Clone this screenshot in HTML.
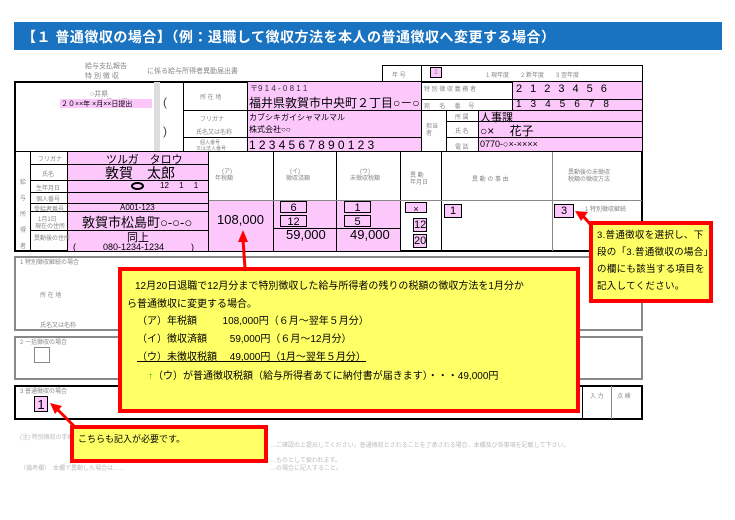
<!DOCTYPE html>
<html><head><meta charset="utf-8"><style>
*{margin:0;padding:0;box-sizing:border-box}
body{width:735px;height:520px;background:#fff;position:relative;overflow:hidden;font-family:"Liberation Sans","Noto Sans CJK JP",sans-serif;color:#000}
.a{position:absolute}
.b{position:absolute;border:1px solid #000}
.p{background:#fcc8fc}
.t{position:absolute;font-size:6px;color:#888;white-space:nowrap}
.k{position:absolute;white-space:nowrap}
.y{position:absolute;background:#ffff66;border:4px solid #f00}
.bx{position:absolute;border:1px solid #000;background:#fcc8fc;font-size:11px;text-align:center;line-height:12px}
</style></head><body>
<div class="a" style="left:14px;top:22px;width:708px;height:28px;background:#1a73c0"></div>
<div class="k" style="left:22px;top:27px;font-size:14px;font-weight:bold;color:#fff;letter-spacing:0.5px">【１ 普通徴収の場合】（例：退職して徴収方法を本人の普通徴収へ変更する場合）</div>
<div class="t" style="left:85px;top:61px;font-size:7px">給与支払報告</div>
<div class="t" style="left:85px;top:71px;font-size:7px">特 別 徴 収</div>
<div class="t" style="left:147px;top:66px;font-size:7px">に係る給与所得者異動届出書</div>
<div class="b" style="left:382px;top:65px;width:261px;height:17px"></div>
<div class="a" style="left:421px;top:65px;width:1px;height:17px;background:#000"></div>
<div class="t" style="left:392px;top:70px">年 号</div>
<div class="bx" style="left:430px;top:67px;width:12px;height:11px;font-size:7px;color:#888;line-height:10px">1</div>
<div class="t" style="left:486px;top:70px">1 現年度　　2 新年度　　3 翌年度</div>
<div class="a" style="left:14px;top:81px;width:629px;height:171px;border:2px solid #000"></div>
<div class="a" style="left:154px;top:82px;width:6px;height:70px;background:#ddd"></div>
<div class="t" style="left:90px;top:89px;font-size:7px">○井県</div>
<div class="t" style="left:90px;top:97px;font-size:7px">○○市長 　殿</div>
<div class="a p" style="left:60px;top:99px;width:92px;height:9px"></div>
<div class="k" style="left:61px;top:99px;font-size:7px">２０××年 ×月××日提出</div>
<div class="t" style="left:163px;top:95px;font-size:12px;color:#444">(</div>
<div class="t" style="left:163px;top:124px;font-size:12px;color:#444">)</div>
<div class="a" style="left:183px;top:82px;width:1px;height:70px;background:#000"></div>
<div class="a" style="left:247px;top:82px;width:1px;height:70px;background:#000"></div>
<div class="a p" style="left:248px;top:82px;width:173px;height:70px"></div>
<div class="a" style="left:183px;top:110px;width:238px;height:1px;background:#000"></div>
<div class="a" style="left:183px;top:137px;width:238px;height:1px;background:#000"></div>
<div class="t" style="left:200px;top:92px">所 在 地</div>
<div class="t" style="left:200px;top:114px">フリガナ</div>
<div class="t" style="left:196px;top:127px">氏名又は名称</div>
<div class="t" style="left:200px;top:139px;font-size:5px">個人番号</div>
<div class="t" style="left:196px;top:145px;font-size:5px">又は法人番号</div>
<div class="k" style="left:250px;top:83px;font-size:8px;color:#333">〒9 1 4 - 0 8 1 1</div>
<div class="k" style="left:249px;top:94px;font-size:12px">福井県敦賀市中央町２丁目○－○</div>
<div class="k" style="left:249px;top:112px;font-size:8px">カブシキガイシャマルマル</div>
<div class="k" style="left:249px;top:124px;font-size:8px">株式会社○○</div>
<div class="k" style="left:249px;top:138px;font-size:12px;letter-spacing:3.2px">1234567890123</div>
<div class="a" style="left:421px;top:82px;width:1px;height:70px;background:#000"></div>
<div class="a p" style="left:512px;top:82px;width:130px;height:28px"></div>
<div class="a p" style="left:478px;top:110px;width:164px;height:42px"></div>
<div class="a" style="left:422px;top:99px;width:220px;height:1px;background:#000"></div>
<div class="a" style="left:422px;top:110px;width:220px;height:1px;background:#000"></div>
<div class="a" style="left:512px;top:82px;width:1px;height:28px;background:#000"></div>
<div class="t" style="left:424px;top:84px">特 別 徴 収 義 務 者</div>
<div class="t" style="left:424px;top:101px">宛 　 名 　 番 　号</div>
<div class="k" style="left:516px;top:83px;font-size:11px;letter-spacing:8px">2123456</div>
<div class="k" style="left:516px;top:99px;font-size:10px;letter-spacing:9px">1345678</div>
<div class="a" style="left:446px;top:110px;width:1px;height:42px;background:#000"></div>
<div class="a" style="left:478px;top:110px;width:1px;height:42px;background:#000"></div>
<div class="a" style="left:446px;top:121px;width:196px;height:1px;background:#000"></div>
<div class="a" style="left:446px;top:137px;width:196px;height:1px;background:#000"></div>
<div class="t" style="left:426px;top:121px">担当</div>
<div class="t" style="left:426px;top:128px">者</div>
<div class="t" style="left:455px;top:112px">所 属</div>
<div class="t" style="left:455px;top:126px">氏 名</div>
<div class="t" style="left:455px;top:142px">電 話</div>
<div class="k" style="left:480px;top:109px;font-size:11px">人事課</div>
<div class="k" style="left:480px;top:122px;font-size:12px">○×　 花子</div>
<div class="k" style="left:480px;top:139px;font-size:9px">0770-○×-××××</div>
<div class="a" style="left:15px;top:151px;width:627px;height:1px;background:#000"></div>
<div class="a" style="left:30px;top:152px;width:1px;height:99px;background:#000"></div>
<div class="a" style="left:67px;top:152px;width:1px;height:99px;background:#000"></div>
<div class="a p" style="left:68px;top:152px;width:140px;height:99px"></div>
<div class="a p" style="left:209px;top:200px;width:191px;height:51px"></div>
<div class="a" style="left:208px;top:152px;width:1px;height:99px;background:#000"></div>
<div class="a" style="left:273px;top:152px;width:1px;height:99px;background:#000"></div>
<div class="a" style="left:336px;top:152px;width:1px;height:99px;background:#000"></div>
<div class="a" style="left:400px;top:152px;width:1px;height:99px;background:#000"></div>
<div class="a" style="left:441px;top:152px;width:1px;height:99px;background:#000"></div>
<div class="a" style="left:552px;top:152px;width:1px;height:99px;background:#888"></div>
<div class="a" style="left:209px;top:200px;width:433px;height:1px;background:#888"></div>
<div class="a" style="left:274px;top:228px;width:126px;height:1px;background:#000"></div>
<div class="t" style="left:20px;top:175px;line-height:16px;width:6px;white-space:normal">給与所得者</div>
<div class="a" style="left:31px;top:164px;width:177px;height:1px;background:#000"></div>
<div class="a" style="left:31px;top:180px;width:177px;height:1px;background:#000"></div>
<div class="a" style="left:31px;top:192px;width:177px;height:1px;background:#000"></div>
<div class="a" style="left:31px;top:203px;width:177px;height:1px;background:#000"></div>
<div class="a" style="left:31px;top:211px;width:177px;height:1px;background:#000"></div>
<div class="a" style="left:31px;top:230px;width:177px;height:1px;background:#000"></div>
<div class="t" style="left:38px;top:154px">フリガナ</div>
<div class="t" style="left:42px;top:169px">氏名</div>
<div class="t" style="left:36px;top:183px">生年月日</div>
<div class="t" style="left:36px;top:194px">個人番号</div>
<div class="t" style="left:34px;top:204px">受給者番号</div>
<div class="t" style="left:38px;top:214px">1月1日</div>
<div class="t" style="left:35px;top:221px">現在の住所</div>
<div class="t" style="left:34px;top:233px">異動後の住所</div>
<div class="k" style="left:106px;top:151px;font-size:11px">ツルガ　タロウ</div>
<div class="k" style="left:105px;top:163px;font-size:14px">敦賀　太郎</div>
<div class="a" style="left:131px;top:182px;width:13px;height:8px;border:2px solid #000;border-radius:50%"></div>
<div class="k" style="left:160px;top:180px;font-size:8px">12 　1 　1</div>
<div class="k" style="left:120px;top:203px;font-size:8px">A001-123</div>
<div class="k" style="left:82px;top:212px;font-size:13px">敦賀市松島町○-○-○</div>
<div class="k" style="left:127px;top:229px;font-size:11px">同上</div>
<div class="k" style="left:73px;top:240px;font-size:9px">(　　　080-1234-1234　　　)</div>
<div class="t" style="left:222px;top:166px">(ア)</div>
<div class="t" style="left:215px;top:173px">年税額</div>
<div class="t" style="left:290px;top:166px">(イ)</div>
<div class="t" style="left:286px;top:173px">徴収済額</div>
<div class="t" style="left:360px;top:166px">(ウ)</div>
<div class="t" style="left:350px;top:173px">未徴収税額</div>
<div class="k" style="left:217px;top:212px;font-size:13px">108,000</div>
<div class="bx" style="left:280px;top:201px;width:27px;height:12px">6</div>
<div class="bx" style="left:280px;top:215px;width:27px;height:12px">12</div>
<div class="bx" style="left:344px;top:201px;width:27px;height:12px">1</div>
<div class="bx" style="left:344px;top:215px;width:27px;height:12px">5</div>
<div class="k" style="left:286px;top:227px;font-size:13px">59,000</div>
<div class="k" style="left:350px;top:227px;font-size:13px">49,000</div>
<div class="t" style="left:410px;top:170px">異 動</div>
<div class="t" style="left:410px;top:177px">年月日</div>
<div class="t" style="left:472px;top:174px">異 動 の 事 由</div>
<div class="t" style="left:568px;top:167px">異動後の未徴収</div>
<div class="t" style="left:568px;top:174px">税額の徴収方法</div>
<div class="bx" style="left:405px;top:202px;width:22px;height:11px;font-size:9px">×</div>
<div class="bx" style="left:413px;top:218px;width:14px;height:14px">12</div>
<div class="bx" style="left:413px;top:234px;width:14px;height:14px">20</div>
<div class="bx" style="left:444px;top:204px;width:18px;height:14px">1</div>
<div class="bx" style="left:554px;top:204px;width:20px;height:14px">3</div>
<div class="t" style="left:585px;top:204px">1 特別徴収継続</div>
<div class="a" style="left:14px;top:256px;width:629px;height:75px;border:2px solid #888"></div>
<div class="t" style="left:20px;top:257px">1 特別徴収継続の場合</div>
<div class="t" style="left:40px;top:290px">所 在 地</div>
<div class="t" style="left:40px;top:320px">氏名又は名称</div>
<div class="a" style="left:14px;top:336px;width:629px;height:44px;border:2px solid #888"></div>
<div class="t" style="left:20px;top:337px">2 一括徴収の場合</div>
<div class="a" style="left:34px;top:347px;width:16px;height:16px;border:1px solid #888"></div>
<div class="a" style="left:14px;top:385px;width:629px;height:35px;border:2px solid #000"></div>
<div class="t" style="left:20px;top:386px">3 普通徴収の場合</div>
<div class="bx" style="left:34px;top:396px;width:14px;height:16px;font-size:13px;line-height:16px">1</div>
<div class="a" style="left:582px;top:386px;width:1px;height:33px;background:#000"></div>
<div class="a" style="left:611px;top:386px;width:1px;height:33px;background:#888"></div>
<div class="t" style="left:590px;top:391px">入 力</div>
<div class="t" style="left:617px;top:391px">点 検</div>
<div class="t" style="left:20px;top:432px;color:#bbb">(注) 特別徴収の手続き…… </div>
<div class="t" style="left:270px;top:440px;color:#bbb">…ご確認の上提出してください。普通徴収とされることを了承される場合、本欄及び各事項を記載して下さい。</div>
<div class="t" style="left:270px;top:455px;color:#bbb">…ものとして扱われます。</div>
<div class="t" style="left:270px;top:463px;color:#bbb">…の場合に記入すること。</div>
<div class="t" style="left:20px;top:463px;color:#bbb">（備考欄）　本欄で異動した場合は……</div>
<div class="y" style="left:118px;top:267px;width:462px;height:146px"></div>
<div class="k" style="left:135px;top:277px;font-size:10px">12月20日退職で12月分まで特別徴収した給与所得者の残りの税額の徴収方法を1月分か</div>
<div class="k" style="left:127px;top:295px;font-size:10px">ら普通徴収に変更する場合。</div>
<div class="k" style="left:137px;top:312px;font-size:10px;white-space:pre">（ア）年税額　　  108,000円（６月～翌年５月分）</div>
<div class="k" style="left:137px;top:330px;font-size:10px;white-space:pre">（イ）徴収済額　　 59,000円（６月～12月分）</div>
<div class="k" style="left:137px;top:348px;font-size:10px;white-space:pre;text-decoration:underline">（ウ）未徴収税額　 49,000円（1月～翌年５月分）</div>
<div class="k" style="left:148px;top:367px;font-size:10px;white-space:pre"><span style="color:#3a3">↑</span>（ウ）が普通徴収税額（給与所得者あてに納付書が届きます）・・・49,000円</div>
<div class="y" style="left:589px;top:221px;width:124px;height:82px"></div>
<div class="k" style="left:597px;top:227px;font-size:9.5px;line-height:17px;white-space:normal;width:112px;letter-spacing:0.3px">3.普通徴収を選択し、下段の「3.普通徴収の場合」の欄にも該当する項目を記入してください。</div>
<div class="y" style="left:70px;top:425px;width:198px;height:38px"></div>
<div class="k" style="left:78px;top:432px;font-size:9px">こちらも記入が必要です。</div>
<svg class="a" style="left:0;top:0" width="735" height="520">
<g stroke="#f00" stroke-width="3" fill="#f00">
<line x1="245" y1="268" x2="243" y2="240"/>
<polygon points="243,230 238,242 248,242" stroke="none"/>
<line x1="590" y1="224" x2="583" y2="216"/>
<polygon points="575,211 588,212 581,221" stroke="none"/>
<line x1="74" y1="426" x2="58" y2="410"/>
<polygon points="50,403 62,406 55,414" stroke="none"/>
</g></svg>
</body></html>
